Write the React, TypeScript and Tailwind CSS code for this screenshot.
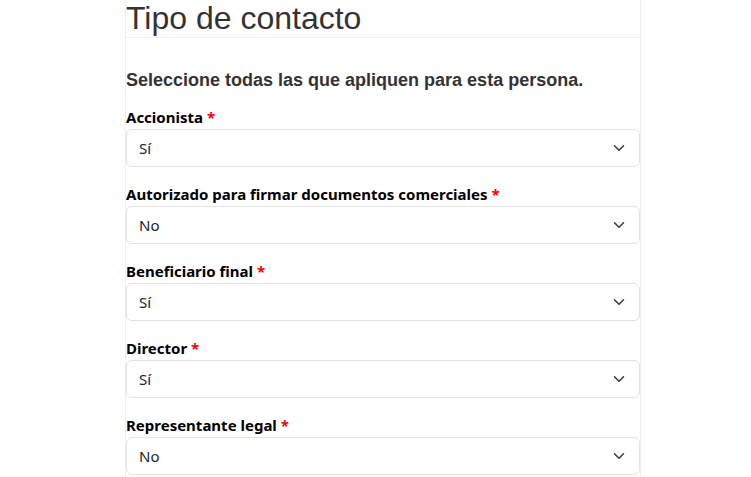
import React from 'react';

const fields = [
  { label: 'Accionista', value: 'Sí' },
  { label: 'Autorizado para firmar documentos comerciales', value: 'No' },
  { label: 'Beneficiario final', value: 'Sí' },
  { label: 'Director', value: 'Sí' },
  { label: 'Representante legal', value: 'No' },
];

const Chevron = () => (
  <svg width="16" height="12" viewBox="0 0 16 16" fill="none" className="shrink-0">
    <path d="m2 5 6 6 6-6" stroke="#343a40" strokeWidth="2" strokeLinecap="round" strokeLinejoin="round" />
  </svg>
);

const SelectField: React.FC<{ label: string; value: string }> = ({ label, value }) => (
  <div className="mb-[15px]">
    <div className="h-[24px] leading-[24px] text-[15px] font-bold text-black" style={{ fontFamily: '"Noto Sans", sans-serif' }}>
      {label} <span className="text-[#ff0000]">*</span>
    </div>
    <div className="h-[38px] flex items-center justify-between pl-3 pr-3 border border-[#dee2e6] rounded-[6px] bg-white">
      <span className="text-[15px] text-[#212529]" style={{ fontFamily: '"Noto Sans", sans-serif' }}>{value}</span>
      <Chevron />
    </div>
  </div>
);

export default function App() {
  return (
    <div className="w-[751px] h-[477px] bg-white overflow-hidden">
      <div className="ml-[125px] w-[516px] min-h-[477px] border-x border-[#eeeeee]">
        <h1
          className="h-[38px] text-[32px] leading-[36px] text-[#333333] border-b border-[#eeeeee] font-normal"
          style={{ fontFamily: '"Liberation Sans", Arial, sans-serif' }}
        >
          Tipo de contacto
        </h1>
        <p
          className="mt-[30px] mb-[13px] text-[18px] leading-[24px] font-bold text-[#333333]"
          style={{ fontFamily: '"Liberation Sans", Arial, sans-serif' }}
        >
          Seleccione todas las que apliquen para esta persona.
        </p>
        {fields.map((f) => (
          <SelectField key={f.label} label={f.label} value={f.value} />
        ))}
      </div>
    </div>
  );
}
